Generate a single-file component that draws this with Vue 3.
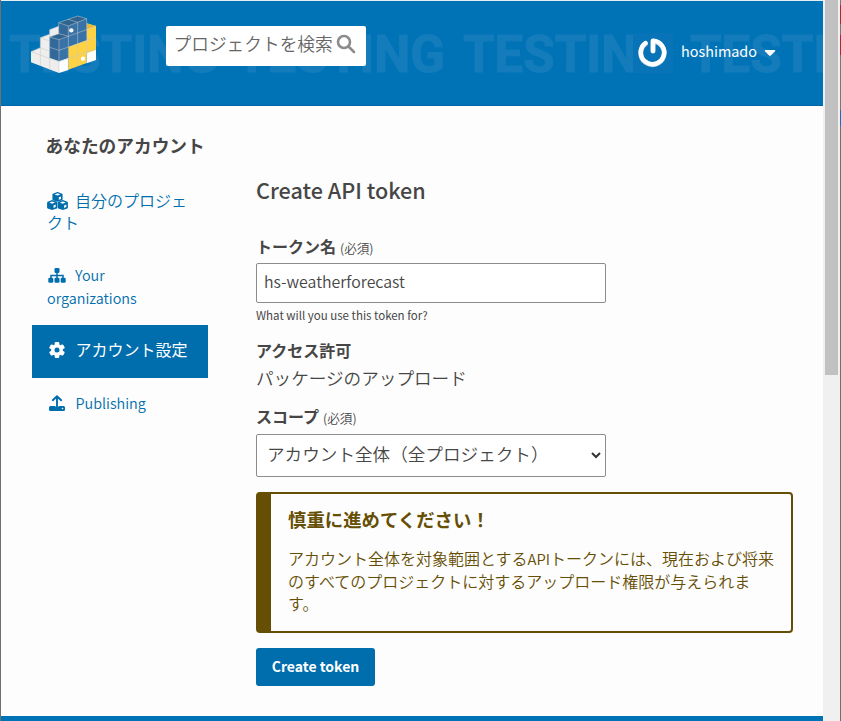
<script setup>
import { ref } from 'vue'
const tokenName = ref('hs-weatherforecast')
const banner = [9, 236, 463, 690]
</script>

<template>
  <div class="window">
    <div class="edge left"></div>
    <div class="page">
      <header class="header">
        <svg class="banner" width="822" height="105" viewBox="1 1 822 105" aria-hidden="true">
          <text v-for="x in banner" :key="x" :x="x" y="71.5" textLength="209" lengthAdjust="spacingAndGlyphs">TESTING</text>
        </svg>
        <svg class="logo" width="90" height="80" viewBox="0 0 270 240">
          <path fill="#efeeec" d="M33 140 61 128V98L89 88V74L117 63 145 100 117 168V204L33 172Z" />
          <path fill="#fff" d="M117 168 145 158V195L117 204ZM200 143 228 133V165L200 175Z" />
          <path fill="#ffd242" d="M145 125 200 105V55L228 63V135L200 145V174L145 194Z" />
          <path fill="#e5b93b" d="M200 72V55L228 63Z" />
          <path fill="#3872a6" d="M89 96 117 86V53L173 33 200 41V105L145 125V158L117 168 89 158Z" />
          <path fill="#2f638f" d="M116 53 173 33 200 41 145 63ZM89 96 117 86 145 94 117 104Z" />
          <path fill="#32699a" d="M89 96 117 104V168L89 158ZM116 53 145 63V94L116 86Z" />
          <path class="seam" d="M33 140 117 170 228 132M61 128V183M61 98V128M61 98 89 108M89 74V194M89 127 117 136 228 97M61 128 89 138M33 140 61 128M61 98 89 88M89 74 116 64M89 96 117 104 200 74 228 63M89 96 117 86 145 94M116 86V53L145 63 200 41 173 33 116 53M144 43 173 52V182M145 63V194M200 41V175M117 104V204" />
          <circle cx="154" cy="76" r="6.5" fill="#fff" /><circle cx="189" cy="161" r="6.5" fill="#fff" />
        </svg>
        <label class="search">
          <span>プロジェクトを検索</span>
          <svg width="20" height="20" viewBox="0 0 20 20"><circle cx="8" cy="8" r="6" /><path d="m12.5 12.5 5.5 5.5" /></svg>
        </label>
        <div class="user">
          <svg class="avatar" width="40" height="40" viewBox="0 0 40 40">
            <rect width="40" height="40" rx="2" fill="#0873b6" />
            <path d="M12.500 10.5A11.700 11.700 0 1 0 20 8.2V18" fill="none" stroke="#b9d0df" stroke-width="5" stroke-linecap="round" stroke-linejoin="round" />
            <path d="M12.500 10A11.700 11.700 0 1 0 20 7.7V18" fill="none" stroke="#fff" stroke-width="4.3" stroke-linecap="round" stroke-linejoin="round" />
          </svg>
          <span>hoshimado</span>
          <svg width="12" height="8" viewBox="0 0 12 8"><path d="M1.5 1h9a.8.8 0 0 1 .6 1.2L6.8 6.5a1.1 1.1 0 0 1-1.6 0L.9 2.2A.8.8 0 0 1 1.5 1Z" fill="#fff" /></svg>
        </div>
      </header>

      <div class="body">
        <aside>
          <h2>あなたのアカウント</h2>
          <nav>
            <a class="projects">
              <svg width="21" height="18" viewBox="0 0 21 18">
                <g v-for="p in [[10.5, 4.8], [5.2, 12.9], [15.8, 12.9]]" :key="p[0]" :transform="`translate(${p[0]} ${p[1]})`">
                  <path d="M0-4.9 4.6-3.1 5.1-2.3V2.8L4.6 3.5 0 5-4.6 3.5-5.1 2.8V-2.3L-4.6-3.1Z" fill="#006dad" />
                  <path d="M0-3.5 2.9-2.3 0-1.2-2.9-2.3ZM1.3.5 3.5-.4V2.1L1.3 3Z" fill="#fdfdfd" />
                </g>
              </svg>自分のプロジェ<br>クト</a>
            <a class="orgs"><svg width="18" height="15" viewBox="0 0 18 15"><path d="M9 4v7M3 11V7.5h12V11" fill="none" stroke="currentColor" stroke-width="1.5" /><g fill="currentColor"><rect x="6.5" width="5" height="5" rx="1.2" /><rect x=".3" y="9.7" width="5" height="5" rx="1.2" /><rect x="6.5" y="9.7" width="5" height="5" rx="1.2" /><rect x="12.7" y="9.7" width="5" height="5" rx="1.2" /></g></svg>Your<br>organizations</a>
            <a class="active"><svg width="16" height="16" viewBox="0 0 16 16"><g fill="#fff"><circle cx="8" cy="8" r="5.9" /><rect v-for="a in [0, 60, 120]" :key="a" x="5.7" y="0" width="4.6" height="16" rx="1.2" :transform="`rotate(${a} 8 8)`" /></g><circle cx="8" cy="8" r="2.5" fill="#006dad" /></svg>アカウント設定</a>
            <a class="publishing"><svg width="16" height="16" viewBox="0 0 16 16"><path d="M8 12V1.5M3.8 5.2 8 1.2l4.2 4" fill="none" stroke="currentColor" stroke-width="1.9" stroke-linecap="round" stroke-linejoin="round" /><path d="M1.5 11h4.7a1.9 1.9 0 0 0 3.6 0h4.7q1.5 0 1.5 1.5v2q0 1.5-1.5 1.5h-13Q0 16 0 14.500v-2Q0 11 1.500 11Z" fill="currentColor" /><circle cx="13.5" cy="13.500" r=".8" fill="#fdfdfd" /></svg>Publishing</a>
          </nav>
        </aside>

        <main>
          <h1>Create API token</h1>
          <div class="label name">トークン名<small>(必須)</small></div>
          <input v-model="tokenName" type="text">
          <p class="help">What will you use this token for?</p>
          <div class="label access">アクセス許可</div>
          <p class="value">パッケージのアップロード</p>
          <div class="label scope">スコープ<small>(必須)</small></div>
          <div class="select">
            <span>アカウント全体（全プロジェクト）</span>
            <svg width="10" height="7" viewBox="0 0 10 7"><path d="m1 1 4 4 4-4" fill="none" stroke="#333" stroke-width="2" /></svg>
          </div>
          <section class="callout">
            <h3>慎重に進めてください！</h3>
            <p>アカウント全体を対象範囲とする<span>API</span>トークンには、現在および将来<br>のすべてのプロジェクトに対するアップロード権限が与えられま<br>す。</p>
          </section>
          <button type="button">Create token</button>
        </main>
      </div>
      <footer></footer>
    </div>
    <div class="scrollbar"><div class="thumb"></div></div>
    <div class="edge right"></div>
  </div>
</template>

<style>
body { margin: 0; overflow: hidden; }
</style>

<style scoped>
* { box-sizing: border-box; }
h1, h2, h3, p { margin: 0; }
.window { display: flex; width: 841px; height: 721px; font-family: "Noto Sans CJK JP", sans-serif; color: #464646; font-size: 16px; }
.edge { width: 1px; height: 721px; background: #707070; }
.edge.right { background: linear-gradient(#777 0 5px, #b02435 5px 24px, #777 24px 35px, #b02435 35px 55px, #777 55px 110px, #1672b5 110px 126px, #707070 126px); }
.page { width: 822px; display: flex; flex-direction: column; background: #fdfdfd; border-top: 1px solid #e5eef4; }
.header { position: relative; height: 105px; flex: none; display: flex; align-items: flex-start; background: #0073b7; border-bottom: 1px solid #0067a6; overflow: hidden; }
.banner { position: absolute; left: 0; top: 0; }
.banner text { font: 700 52px Roboto, sans-serif; fill: #147cbb; stroke: #147cbb; stroke-width: 1px; }
.logo { position: relative; flex: none; margin: 4px 0 0 19px; }
.seam { fill: none; stroke: #c3c8cc; stroke-width: 1.6; stroke-linejoin: round; }
.search { position: relative; display: flex; width: 200px; height: 40px; margin: 25px 0 0 56px; padding-left: 7.5px; background: #fff; border-radius: 2px; font-size: 17.7px; line-height: 35px; font-weight: 350; color: #666; }
.search span { width: 162px; white-space: nowrap; }
.search svg { margin-top: 8px; fill: none; stroke: #8c8c8c; stroke-width: 2.6; stroke-linecap: round; }
.user { position: relative; display: flex; align-items: center; margin: 32px 0 0 267px; height: 40px; color: #fff; font-size: 14.4px; }
.user span { width: 76px; margin: -5px 7px 0 8px; }
.user svg:last-child { margin-top: -1px; }
.body { display: flex; height: 610px; flex: none; }
aside { width: 176px; margin-left: 31px; padding-top: 26px; }
h2 { padding-left: 13.5px; font-size: 17.7px; line-height: 27px; white-space: nowrap; }
nav { color: #006dad; font-size: 16px; font-weight: 350; }
nav a { display: block; padding-left: 15px; line-height: 22px; }
nav svg { vertical-align: -2px; margin-right: 10.5px; }
.projects { margin-top: 30px; }
.projects svg { margin-right: 7px; vertical-align: -3px; }
.orgs, .publishing { font-size: 14.4px; font-weight: 350; }
.orgs { margin-top: 30px; line-height: 23px; }
.orgs svg { margin: 0 9px 0 1px; }
.active { height: 53px; margin-top: 16px; padding-left: 17px; line-height: 48px; background: #006dad; color: #fff; font-weight: 400; }
.publishing { margin-top: 14px; padding-left: 17px; }
main { width: 537px; margin-left: 48px; padding-top: 68px; }
h1 { font-size: 21.600px; line-height: 32px; font-weight: 500; white-space: nowrap; }
.label { font-weight: 700; font-size: 16px; line-height: 24px; }
.label small { margin-left: 4px; font-size: 12.6px; line-height: 1; font-weight: 350; }
.name { margin-top: 28px; }
input { display: block; width: 350px; height: 40px; margin-top: 5px; padding: 0 7px 3px; border: 1px solid #8c8c8c; border-radius: 2px; background: #fff; color: #464646; font-family: inherit; font-size: 15.9px; font-weight: 350; outline: 0; }
.help { margin-top: 3px; font-size: 11.5px; line-height: 18px; }
.access { margin-top: 14px; }
.value { margin-top: 1px; font-size: 17.6px; line-height: 30px; font-weight: 350; }
.scope { margin-top: 11px; }
.select { display: flex; justify-content: space-between; width: 350px; height: 43px; margin-top: 6px; padding: 0 4px 0 10px; border: 1px solid #8c8c8c; border-radius: 2px; background: #fff; font-size: 17.6px; line-height: 38px; font-weight: 350; }
.select svg { margin-top: 17px; }
.callout { height: 141px; margin-top: 15px; padding: 12px 0 0 17px; border: 2px solid #664e04; border-left-width: 15px; border-radius: 4px; color: #664e04; white-space: nowrap; }
h3 { font-size: 18.4px; line-height: 26px; }
.callout p { margin-top: 15px; font-size: 16px; line-height: 22.500px; font-weight: 350; }
.callout p span { font-size: 14.8px; line-height: 1; }
button { display: block; width: 119px; height: 38px; margin-top: 15px; padding: 0 0 2px; border: 0; border-radius: 3px; background: #006dad; color: #fff; font-family: inherit; font-size: 14px; font-weight: 700; }
footer { height: 5px; background: #0073b7; }
.scrollbar { width: 17px; padding: 0 2px; background: #f0f0f0; }
.thumb { height: 375px; background: #c1c1c1; }
</style>
